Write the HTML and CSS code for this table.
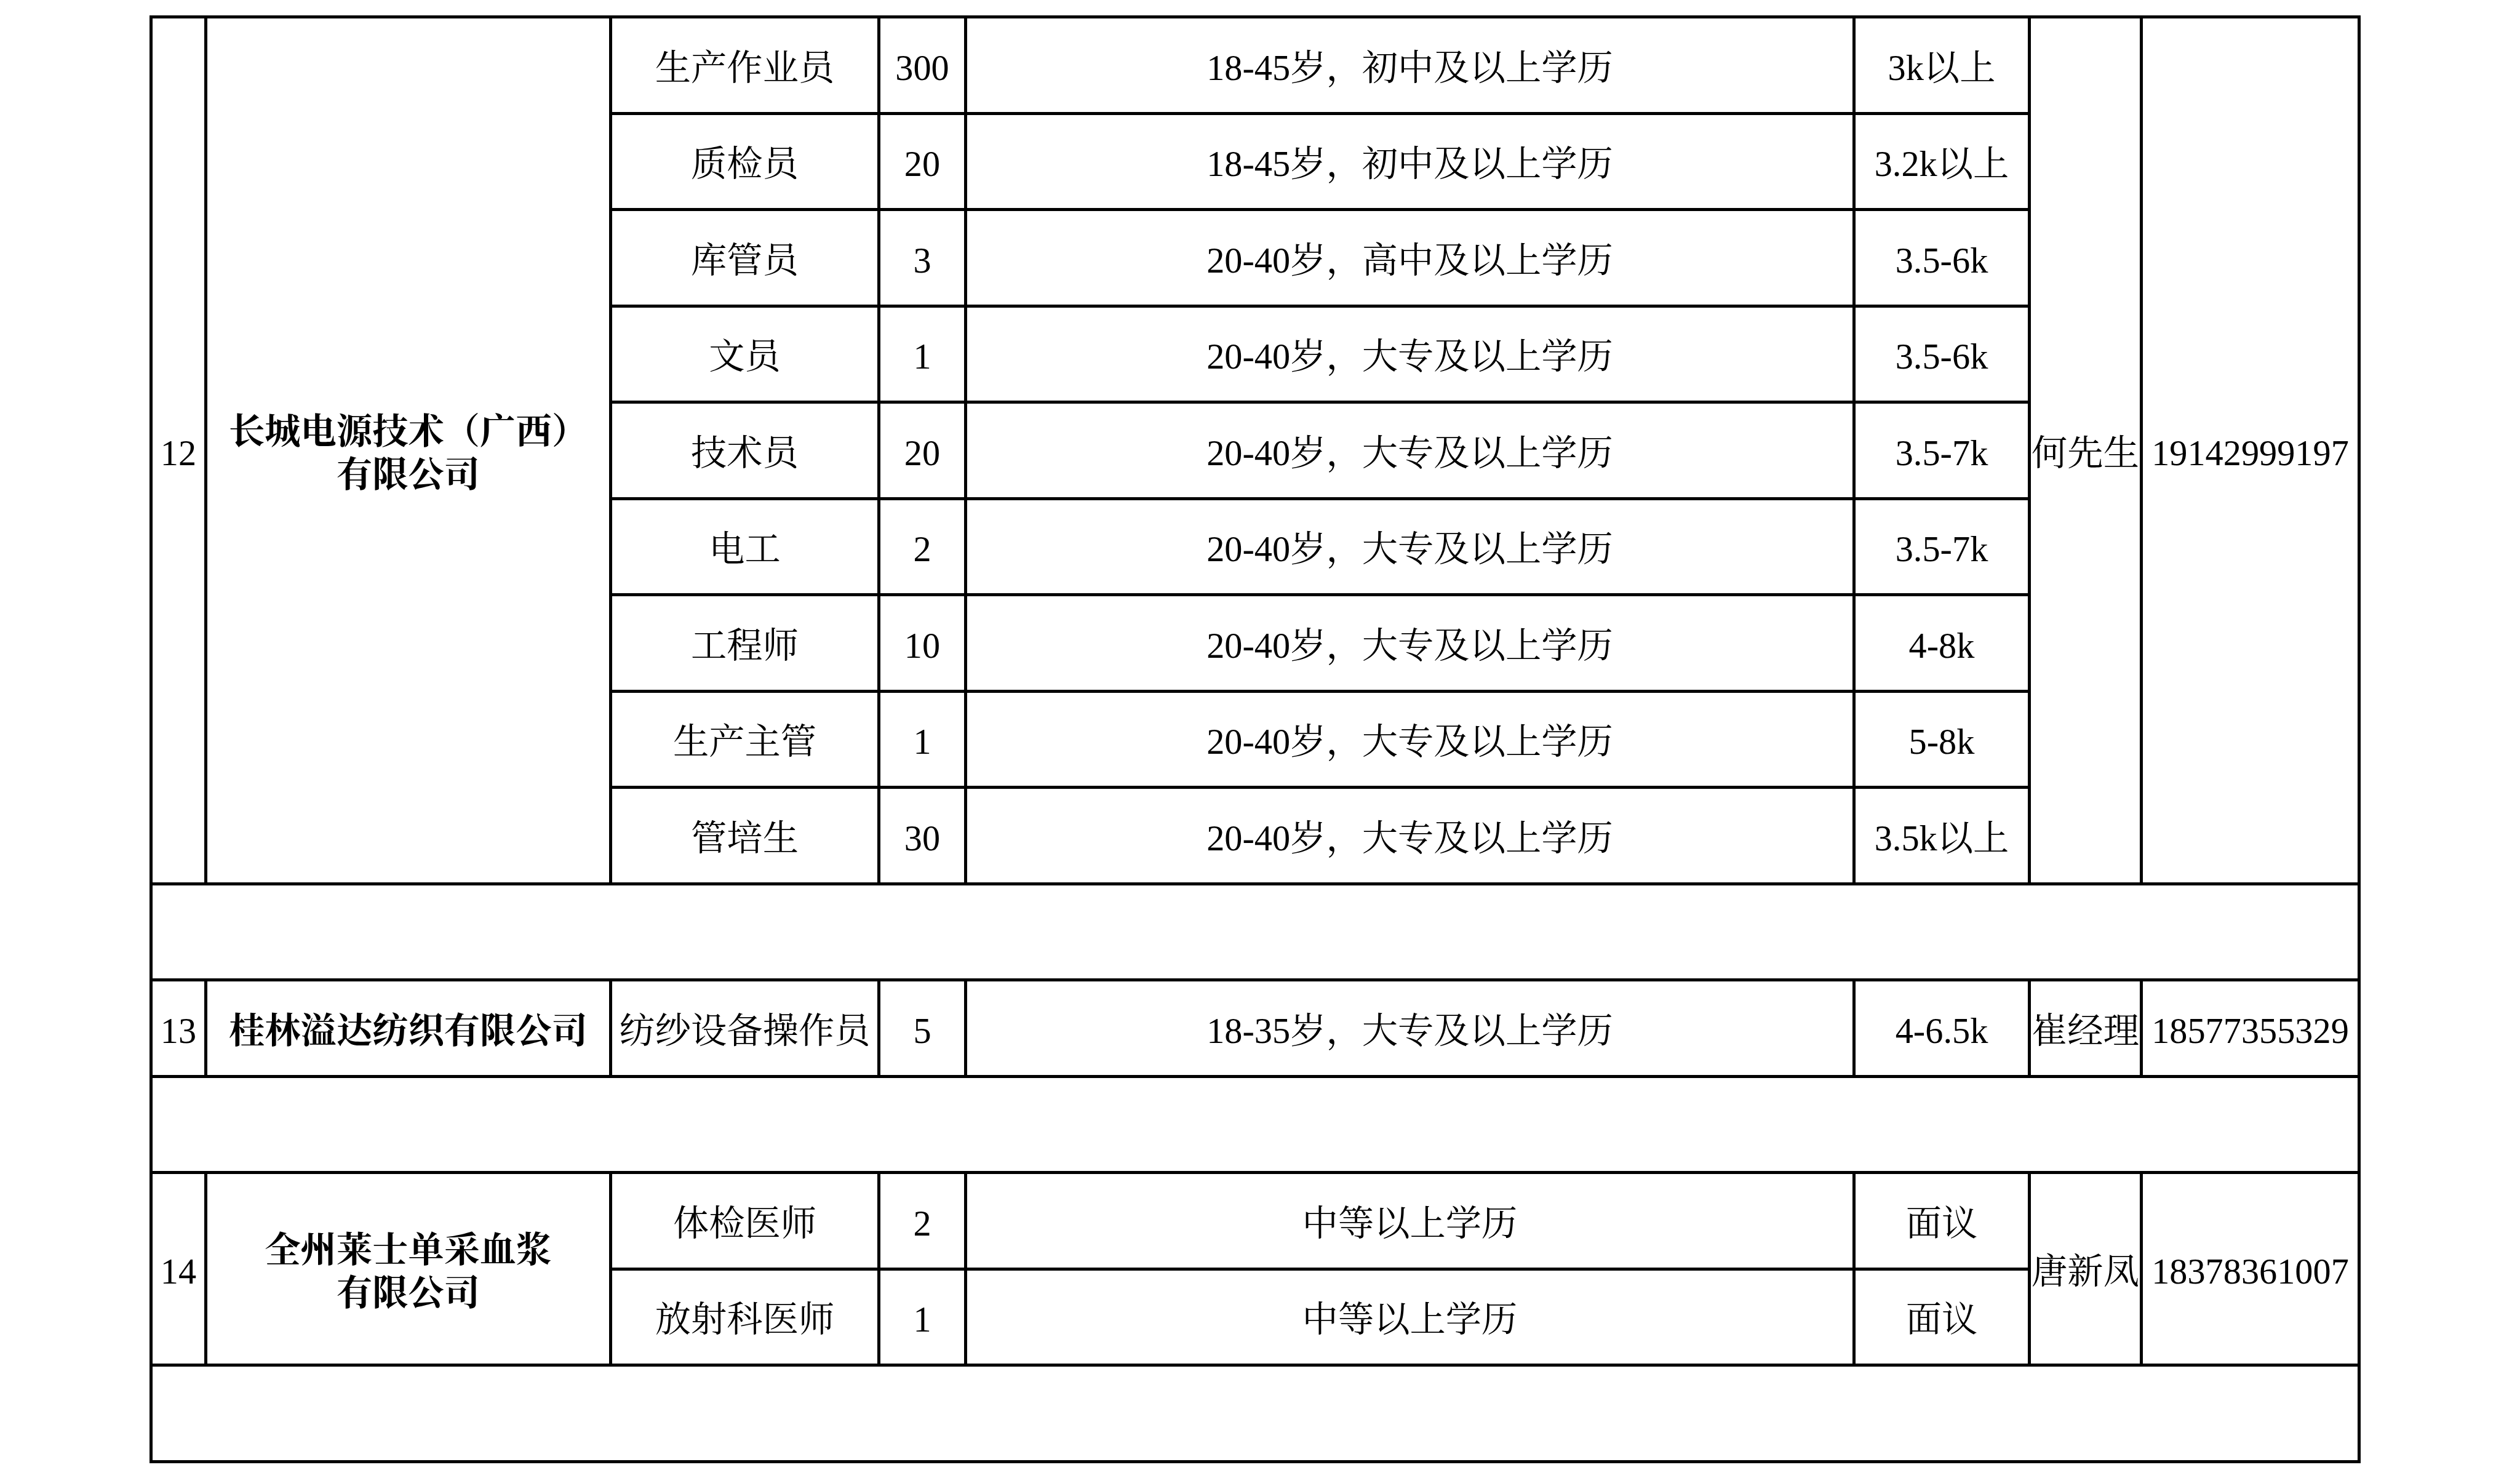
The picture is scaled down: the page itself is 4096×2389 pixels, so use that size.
FILE: index.html
```html
<!DOCTYPE html>
<html lang="zh-CN">
<head>
<meta charset="utf-8">
<title>招聘信息</title>
<link rel="stylesheet" href="styles.css">
</head>
<body>
<div class="page">
<table class="jobs">
<colgroup>
<col class="c-no"><col class="c-co"><col class="c-pos"><col class="c-num"><col class="c-req"><col class="c-pay"><col class="c-con"><col class="c-tel">
</colgroup>
<tbody>
<tr><td rowspan="9">12</td><td rowspan="9" class="co">长城电源技术（广西）<br>有限公司</td><td>生产作业员</td><td>300</td><td>18-45岁，初中及以上学历</td><td>3k以上</td><td rowspan="9">何先生</td><td rowspan="9">19142999197</td></tr>
<tr><td>质检员</td><td>20</td><td>18-45岁，初中及以上学历</td><td>3.2k以上</td></tr>
<tr><td>库管员</td><td>3</td><td>20-40岁，高中及以上学历</td><td>3.5-6k</td></tr>
<tr><td>文员</td><td>1</td><td>20-40岁，大专及以上学历</td><td>3.5-6k</td></tr>
<tr><td>技术员</td><td>20</td><td>20-40岁，大专及以上学历</td><td>3.5-7k</td></tr>
<tr><td>电工</td><td>2</td><td>20-40岁，大专及以上学历</td><td>3.5-7k</td></tr>
<tr><td>工程师</td><td>10</td><td>20-40岁，大专及以上学历</td><td>4-8k</td></tr>
<tr><td>生产主管</td><td>1</td><td>20-40岁，大专及以上学历</td><td>5-8k</td></tr>
<tr><td>管培生</td><td>30</td><td>20-40岁，大专及以上学历</td><td>3.5k以上</td></tr>
<tr><td colspan="8"></td></tr>
<tr><td>13</td><td class="co">桂林溢达纺织有限公司</td><td>纺纱设备操作员</td><td>5</td><td>18-35岁，大专及以上学历</td><td>4-6.5k</td><td>崔经理</td><td>18577355329</td></tr>
<tr><td colspan="8"></td></tr>
<tr><td rowspan="2">14</td><td rowspan="2" class="co">全州莱士单采血浆<br>有限公司</td><td>体检医师</td><td>2</td><td>中等以上学历</td><td>面议</td><td rowspan="2">唐新凤</td><td rowspan="2">18378361007</td></tr>
<tr><td>放射科医师</td><td>1</td><td>中等以上学历</td><td>面议</td></tr>
<tr><td colspan="8"></td></tr>
</tbody>
</table>
</div>
</body>
</html>
```

FILE: styles.css
```css
html, body {
  margin: 0;
  padding: 0;
  background: #ffffff;
}

.page {
  padding: 25px 0 0 243px;
}

.jobs {
  border-collapse: collapse;
  table-layout: fixed;
  width: 3589px;
  font-family: "Liberation Serif", "Noto Serif CJK SC", "Noto Sans CJK SC", serif;
  font-size: 58.3px;
  line-height: 1.2;
  color: #000000;
}

.jobs tr {
  height: 156.5px;
}

.jobs td {
  border: 5px solid #000000;
  padding: 10px 0 0 0;
  text-align: center;
  vertical-align: middle;
  white-space: nowrap;
}

.jobs td.co {
  font-weight: 700;
}

.c-no { width: 89px; }
.c-co { width: 658px; }
.c-pos { width: 436px; }
.c-num { width: 141px; }
.c-req { width: 1444px; }
.c-pay { width: 285px; }
.c-con { width: 182px; }
.c-tel { width: 354px; }
```
